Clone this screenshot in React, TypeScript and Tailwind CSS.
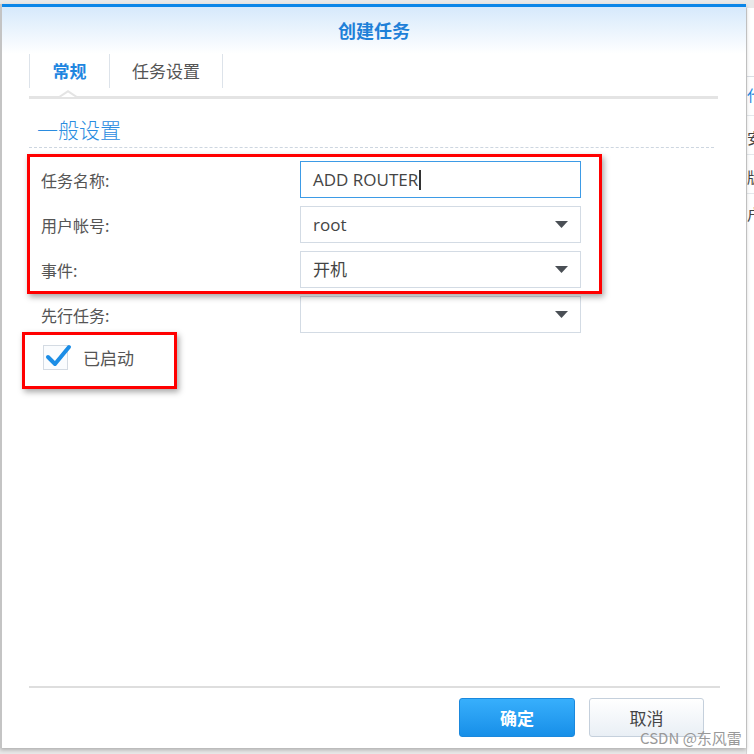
import React from "react";

const FONT = { fontFamily: '"Noto Sans CJK SC", "Noto Sans", sans-serif' };
const INPUT_FONT = { fontFamily: '"Open Sans", "Noto Sans CJK SC", sans-serif' };

function Arrow() {
  return (
    <svg width="13" height="7" viewBox="0 0 13 7" className="shrink-0">
      <path d="M0 0 H13 L6.5 7 Z" fill="#4a4f55" />
    </svg>
  );
}

function FieldRow({
  label,
  value,
  focused,
  select,
}: {
  label: string;
  value: string;
  focused?: boolean;
  select?: boolean;
}) {
  return (
    <div className="flex h-[37px] items-center">
      <div className="ml-[39px] w-[259px] text-[16px] text-[#555]">{label}</div>
      <div
        className={`flex h-[37px] w-[281px] items-center justify-between border bg-white pl-[12px] pr-[12px] text-[17px] text-[#444] ${
          focused ? "border-[#3d9be6]" : "border-[#d3dbe4]"
        }`}
        style={INPUT_FONT}
      >
        <span className="flex items-center">
          {value}
          {focused && <span className="ml-[1px] inline-block h-[20px] w-[2px] bg-[#333]" />}
        </span>
        {select && <Arrow />}
      </div>
    </div>
  );
}

export default function App() {
  return (
    <div className="relative h-[754px] w-[754px] overflow-hidden bg-[#e9e9e9]" style={FONT}>
      {/* background page on the right */}
      <div className="absolute left-[746px] top-[8px] flex h-[746px] w-[20px] flex-col overflow-hidden border-l border-[#d6d6d6] bg-white text-[15px] leading-none">
        <div className="mt-[68px] border-t border-[#d9dee4]" />
        <div className="h-[38px] pt-[10px] text-[#1f86e0]">代</div>
        <div className="border-t border-[#e4e8ec]" />
        <div className="h-[38px] pt-[14px] text-[#444]">安</div>
        <div className="border-t border-[#e4e8ec]" />
        <div className="h-[38px] pt-[14px] text-[#444]">版</div>
        <div className="border-t border-[#e4e8ec]" />
        <div className="h-[38px] pt-[12px] text-[#444]">户</div>
      </div>

      {/* dialog window */}
      <div className="absolute left-0 top-[4px] flex h-[744px] w-[746px] flex-col border-l-2 border-[#c4c4c4] bg-white shadow-[0_2px_4px_rgba(0,0,0,0.25)]">
        <div className="h-[3px] bg-[#0b86e8]" />
        <div className="bg-gradient-to-b from-[#d6e9fb] to-white">
          <div className="flex h-[47px] items-center justify-center text-[18px] font-bold text-[#1e80d8]">
            创建任务
          </div>
        </div>

        {/* tabs */}
        <div className="ml-[27px] flex h-[34px]">
          <div className="flex w-[80px] items-center justify-center border-l border-[#dde3ea] text-[17px] font-bold text-[#1f86e0]">
            常规
          </div>
          <div className="flex w-[114px] items-center justify-center border-l border-r border-[#dde3ea] text-[17px] text-[#555]">
            任务设置
          </div>
        </div>
        <div className="relative ml-[27px] mt-[8px] h-[3px] w-[689px] bg-[#e4e4e4]">
          <svg width="18" height="9" viewBox="0 0 18 9" className="absolute left-[30px] top-[-6px]">
            <path d="M0 6 L9 0 L18 6 Z" fill="#e4e4e4" />
            <path d="M2 7 L9 2.5 L16 7 Z" fill="#fff" />
          </svg>
        </div>

        {/* section title */}
        <div className="ml-[35px] mt-[16px] text-[21px] font-light leading-[28px] text-[#2a8ce0]">一般设置</div>
        <div className="ml-[27px] mt-[4px] w-[685px] border-t border-dashed border-[#cdd6e0]" />

        <div className="mt-[13px] flex flex-col gap-[8px]">
          <FieldRow label="任务名称:" value="ADD ROUTER" focused />
          <FieldRow label="用户帐号:" value="root" select />
          <FieldRow label="事件:" value="开机" select />
          <FieldRow label="先行任务:" value="" select />
        </div>

        {/* enabled */}
        <div className="mt-[12px] flex items-center">
          <div className="relative ml-[41px] h-[25px] w-[25px] border border-[#d4dbe3] bg-[#fafcfe]">
            <svg width="28" height="26" viewBox="0 0 28 26" className="absolute left-[1px] top-[-3px]">
              <path d="M3 14 L10 21 L24 4" fill="none" stroke="#1b8de6" strokeWidth="4" strokeLinecap="round" strokeLinejoin="round" />
            </svg>
          </div>
          <span className="ml-[15px] text-[17px] text-[#555]">已启动</span>
        </div>

        <div className="flex-1" />

        <div className="ml-[27px] h-[2px] w-[691px] bg-[#dedede]" />
        <div className="mt-[10px] mb-[11px] mr-[42px] flex justify-end gap-[14px]">
          <button className="h-[39px] w-[116px] rounded-[3px] border border-[#1a88dd] bg-gradient-to-b from-[#37affc] to-[#168fe8] text-[17px] font-bold text-white">
            确定
          </button>
          <button className="h-[39px] w-[115px] rounded-[3px] border border-[#c5d0dc] bg-gradient-to-b from-white to-[#e9eff5] text-[17px] text-[#444]">
            取消
          </button>
        </div>
      </div>

      {/* annotation boxes */}
      <div className="absolute left-[27px] top-[154px] h-[140px] w-[575px] border-[3px] border-[#ff0000] shadow-[2px_3px_6px_rgba(0,0,0,0.35)]" />
      <div className="absolute left-[22px] top-[332px] h-[57px] w-[155px] border-[3px] border-[#ff0000] shadow-[2px_3px_6px_rgba(0,0,0,0.35)]" />

      {/* watermark */}
      <div className="absolute left-[640px] top-[728px] text-[15px] leading-[20px] text-[#999]">CSDN @东风雷</div>
    </div>
  );
}
